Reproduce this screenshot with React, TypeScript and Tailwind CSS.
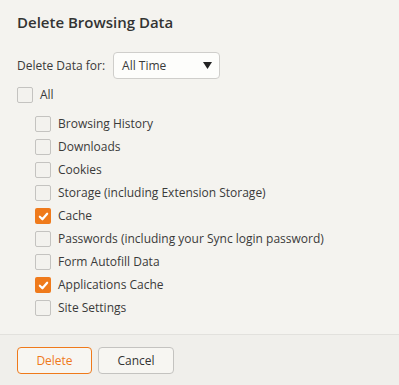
const items: { label: string; checked: boolean }[] = [
  { label: "Browsing History", checked: false },
  { label: "Downloads", checked: false },
  { label: "Cookies", checked: false },
  { label: "Storage (including Extension Storage)", checked: false },
  { label: "Cache", checked: true },
  { label: "Passwords (including your Sync login password)", checked: false },
  { label: "Form Autofill Data", checked: false },
  { label: "Applications Cache", checked: true },
  { label: "Site Settings", checked: false },
];

function Box({ checked }: { checked: boolean }) {
  if (checked) {
    return (
      <span className="w-[16px] h-[16px] rounded-[2px] bg-[#ef7a1b] flex items-center justify-center shrink-0">
        <svg width="11" height="11" viewBox="0 0 12 12" fill="none">
          <path d="M2 6.3 L4.8 9 L10 3" stroke="#fff" strokeWidth="2.4" strokeLinecap="round" strokeLinejoin="round" />
        </svg>
      </span>
    );
  }
  return <span className="w-[16px] h-[16px] rounded-[2px] border border-[#c4c3c0] bg-[#f3f2ee] shrink-0" />;
}

export default function App() {
  return (
    <div
      className="w-[399px] h-[385px] bg-[#f4f3ef] flex flex-col text-[#3a3a3a]"
      style={{ fontFamily: '"Open Sans", "Noto Sans", sans-serif' }}
    >
      <div className="flex-1 px-[17px]">
        <h1 className="text-[15px] font-semibold leading-none pt-[15px] text-[#333]">Delete Browsing Data</h1>

        <div className="flex items-center gap-[8px] mt-[22px] text-[12px]">
          <span>Delete Data for:</span>
          <div className="w-[107px] h-[27px] rounded-[4px] border border-[#cfcecb] bg-[#fdfdfb] flex items-center justify-between pl-[8px] pr-[7px]">
            <span>All Time</span>
            <svg width="9" height="7" viewBox="0 0 9 7">
              <path d="M0 0 H9 L4.5 7 Z" fill="#222" />
            </svg>
          </div>
        </div>

        <div className="flex items-center gap-[7px] mt-[8px] h-[16px] text-[12px]">
          <Box checked={false} />
          <span>All</span>
        </div>

        <div className="pl-[18px] mt-[13px] flex flex-col gap-[7px] text-[12px]">
          {items.map((it) => (
            <div key={it.label} className="flex items-center gap-[7px] h-[16px]">
              <Box checked={it.checked} />
              <span>{it.label}</span>
            </div>
          ))}
        </div>
      </div>

      <div className="h-[51px] border-t border-[#e2e1dd] bg-[#f0efeb] flex items-start gap-[6px] px-[17px] pt-[12px]">
        <button className="w-[75px] h-[27px] rounded-[4px] border border-[#ef7a1b] bg-[#f7f6f2] text-[#ef7a1b] text-[12px]">
          Delete
        </button>
        <button className="w-[76px] h-[27px] rounded-[4px] border border-[#c4c3c0] bg-[#f7f6f2] text-[#333] text-[12px]">
          Cancel
        </button>
      </div>
    </div>
  );
}
